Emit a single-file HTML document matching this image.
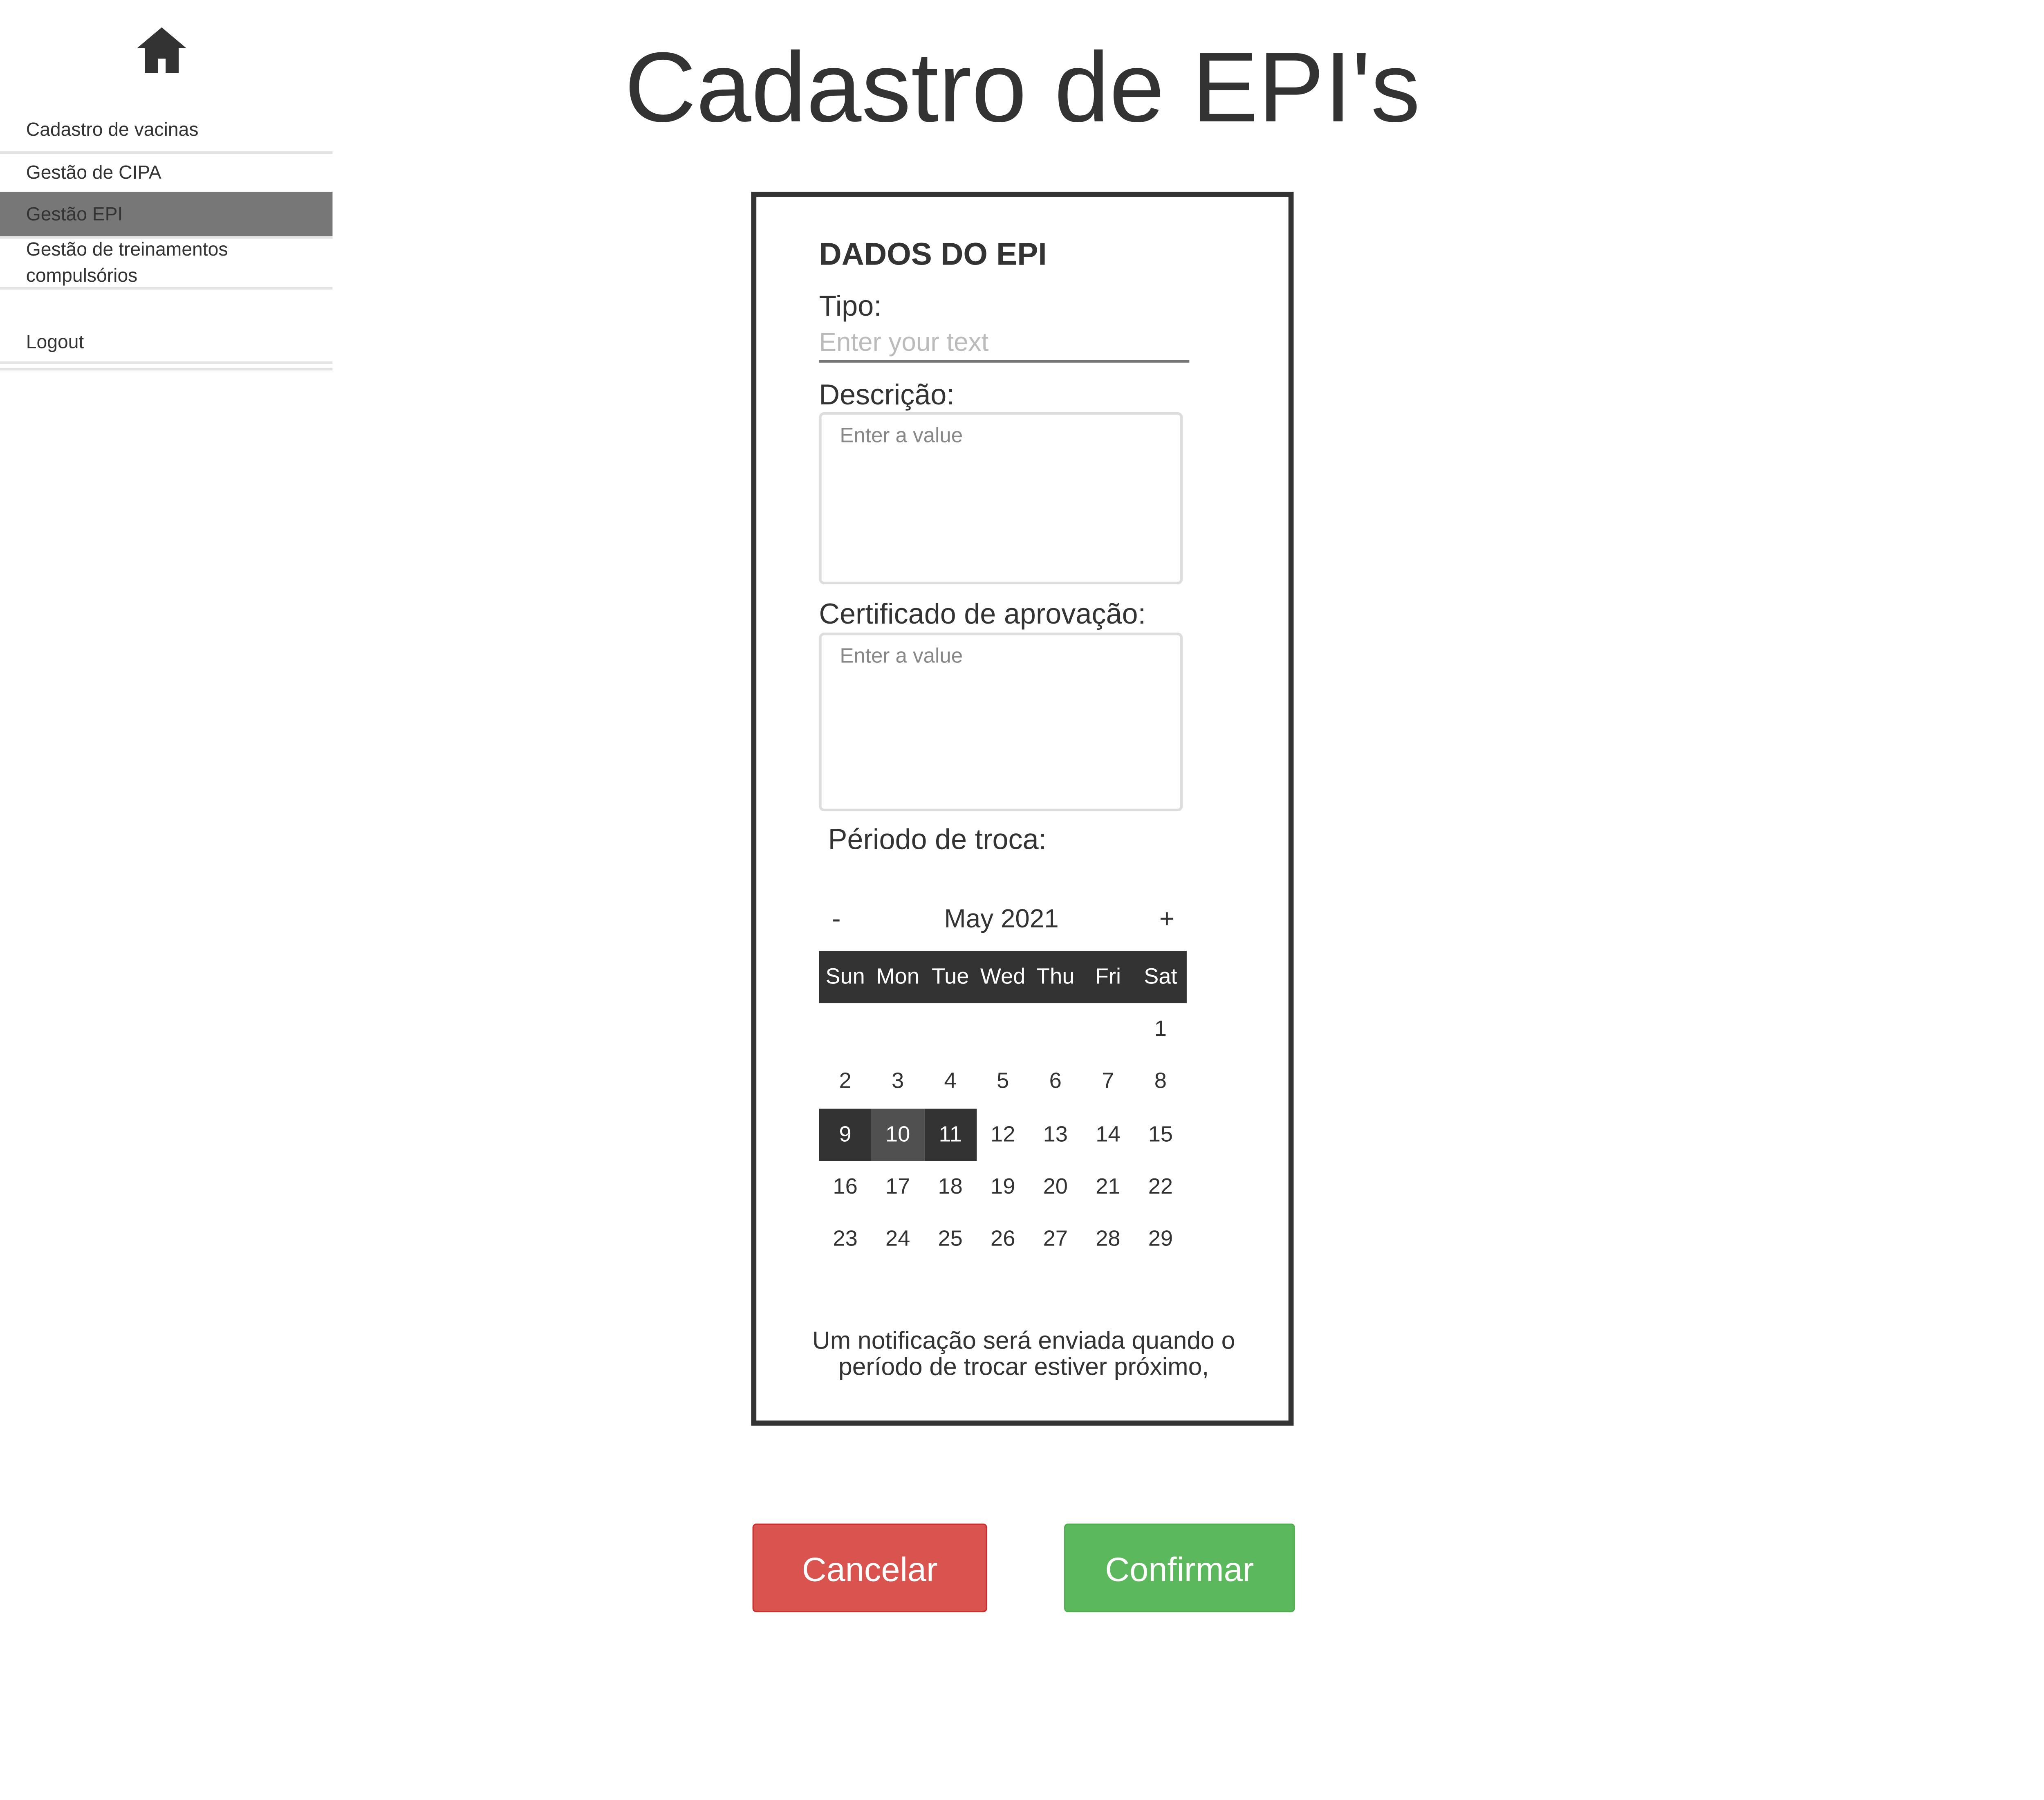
<!DOCTYPE html>
<html><head><meta charset="utf-8">
<style>
html,body{margin:0;padding:0;background:#fff;width:5120px;height:4400px;overflow:hidden}
#w{position:absolute;left:0;top:0;width:1605px;height:1380px;transform:scale(3.19);transform-origin:0 0;font-family:"Liberation Sans",sans-serif;color:#333}
.a{position:absolute;white-space:nowrap}
.sep{position:absolute;left:0;width:255px;height:2px;background:#e3e3e3}
.nav{font-size:14.5px;left:20px;line-height:20px}
.ta{position:absolute;left:628px;width:279px;border:2px solid #ddd;border-radius:4px;box-sizing:border-box}
.ph{position:absolute;left:14px;top:8px;font-size:16px;color:#888}
.cal{position:absolute;left:628px;width:282px}
.row{position:absolute;left:0;width:282px;height:40px}
.c{position:absolute;top:0;width:40.3px;height:40px;line-height:40px;text-align:center;font-size:17px}
.btn{position:absolute;top:1168px;height:68px;border-radius:3px;color:#fff;font-size:26px;line-height:68px;text-align:center;box-sizing:border-box}
</style></head><body><div id="w">
<svg class="a" style="left:104px;top:20px" width="40" height="38" viewBox="0 0 40 38"><path d="M20 1 L39 17 L33 17 L33 36 L23 36 L23 25 L17 25 L17 36 L7 36 L7 17 L1 17 Z" fill="#333"/></svg>
<div class="a nav" style="top:90px">Cadastro de vacinas</div>
<div class="sep" style="top:116px"></div>
<div class="a nav" style="top:123px">Gestão de CIPA</div>
<div class="a" style="left:0;top:147px;width:255px;height:34px;background:#777"></div>
<div class="a nav" style="top:155px">Gestão EPI</div>
<div class="sep" style="top:181px"></div>
<div class="a nav" style="top:182px">Gestão de treinamentos</div>
<div class="a nav" style="top:202px">compulsórios</div>
<div class="sep" style="top:220px"></div>
<div class="a nav" style="top:253px">Logout</div>
<div class="sep" style="top:277px"></div>
<div class="sep" style="top:282px"></div>

<div class="a" style="left:0;width:1568px;text-align:center;top:22px;font-size:76px;line-height:92px">Cadastro de EPI's</div>

<div class="a" style="left:576px;top:147px;width:416px;height:946px;border:4px solid #333;box-sizing:border-box"></div>
<div class="a" style="left:628px;top:182px;font-size:24px;font-weight:bold;line-height:28px">DADOS DO EPI</div>
<div class="a" style="left:628px;top:222px;font-size:22px;line-height:26px">Tipo:</div>
<div class="a" style="left:628px;top:251px;font-size:20px;line-height:24px;color:#bbb">Enter your text</div>
<div class="a" style="left:628px;top:276px;width:284px;height:2px;background:#777"></div>
<div class="a" style="left:628px;top:290px;font-size:22px;line-height:26px">Descrição:</div>
<div class="ta" style="top:316px;height:132px"><div class="ph">Enter a value</div></div>
<div class="a" style="left:628px;top:458px;font-size:22px;line-height:26px">Certificado de aprovação:</div>
<div class="ta" style="top:485px;height:137px"><div class="ph">Enter a value</div></div>
<div class="a" style="left:635px;top:631px;font-size:22px;line-height:26px">Périodo de troca:</div>

<div class="a" style="left:638px;top:693px;font-size:20px;line-height:24px">-</div>
<div class="a" style="left:724px;top:693px;font-size:20px;line-height:24px">May 2021</div>
<div class="a" style="left:889px;top:693px;font-size:20px;line-height:24px">+</div>
<div class="cal" style="top:729px">
<div class="row" style="top:0;background:#333;color:#fff">
<div class="c" style="left:0">Sun</div><div class="c" style="left:40.3px">Mon</div><div class="c" style="left:80.6px">Tue</div><div class="c" style="left:120.9px">Wed</div><div class="c" style="left:161.2px">Thu</div><div class="c" style="left:201.5px">Fri</div><div class="c" style="left:241.8px">Sat</div>
</div>
<div class="row" style="top:40px"><div class="c" style="left:241.8px">1</div></div>
<div class="row" style="top:80px"><div class="c" style="left:0">2</div><div class="c" style="left:40.3px">3</div><div class="c" style="left:80.6px">4</div><div class="c" style="left:120.9px">5</div><div class="c" style="left:161.2px">6</div><div class="c" style="left:201.5px">7</div><div class="c" style="left:241.8px">8</div></div>
<div class="row" style="top:121px"><div class="c" style="left:0;background:#333;color:#fff">9</div><div class="c" style="left:40.3px;background:#505050;color:#fff">10</div><div class="c" style="left:80.6px;background:#333;color:#fff">11</div><div class="c" style="left:120.9px">12</div><div class="c" style="left:161.2px">13</div><div class="c" style="left:201.5px">14</div><div class="c" style="left:241.8px">15</div></div>
<div class="row" style="top:161px"><div class="c" style="left:0">16</div><div class="c" style="left:40.3px">17</div><div class="c" style="left:80.6px">18</div><div class="c" style="left:120.9px">19</div><div class="c" style="left:161.2px">20</div><div class="c" style="left:201.5px">21</div><div class="c" style="left:241.8px">22</div></div>
<div class="row" style="top:201px"><div class="c" style="left:0">23</div><div class="c" style="left:40.3px">24</div><div class="c" style="left:80.6px">25</div><div class="c" style="left:120.9px">26</div><div class="c" style="left:161.2px">27</div><div class="c" style="left:201.5px">28</div><div class="c" style="left:241.8px">29</div></div>
</div>

<div class="a" style="left:592px;width:386px;top:1019px;text-align:center;font-size:19px;line-height:20px;white-space:normal">Um notificação será enviada quando o período de trocar estiver próximo,</div>

<div class="btn" style="left:577px;width:180px;background:#d9534f;border:1px solid #c9302c">Cancelar</div>
<div class="btn" style="left:816px;width:177px;background:#5cb85c;border:1px solid #4cae4c">Confirmar</div>
</div></body></html>
